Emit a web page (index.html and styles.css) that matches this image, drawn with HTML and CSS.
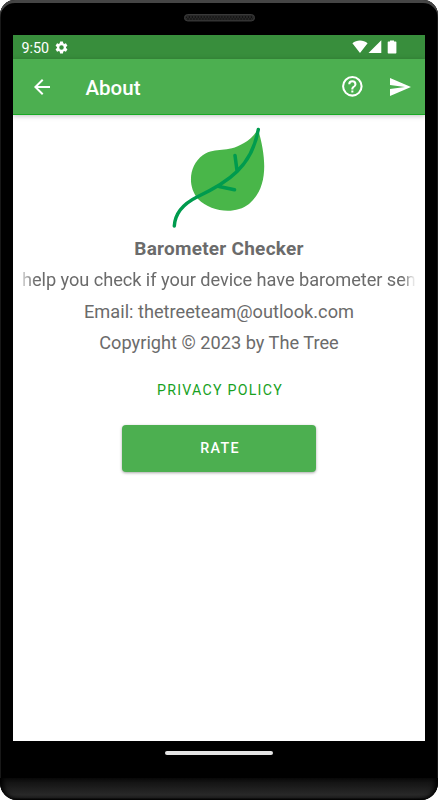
FILE: index.html
```html
<!DOCTYPE html>
<html lang="en">
<head>
<meta charset="utf-8">
<title>About</title>
<link rel="stylesheet" href="styles.css">
</head>
<body>
<div class="phone">
  <div class="phone-top"><svg class="speaker" viewBox="0 0 72 8"><defs><pattern id="mesh" width="3" height="4" patternUnits="userSpaceOnUse"><circle cx="1" cy="1" r=".8" fill="#050505"/><circle cx="2.5" cy="3" r=".8" fill="#050505"/></pattern></defs><rect x=".5" y=".5" width="71" height="6.5" rx="3.2" fill="#292929" stroke="#3c3c3c"/><rect x="2" y="2" width="68" height="4" rx="2" fill="url(#mesh)"/></svg></div>
  <main class="screen">
    <div class="status">
      <span class="time">9:50</span>
      <svg class="gear" viewBox="0 0 24 24"><path d="M19.14 12.94c.04-.3.06-.61.06-.94s-.02-.64-.07-.94l2.03-1.58a.49.49 0 0 0 .12-.61l-1.92-3.32a.49.49 0 0 0-.59-.22l-2.39.96a7 7 0 0 0-1.62-.94l-.36-2.54a.48.48 0 0 0-.48-.41h-3.84a.47.47 0 0 0-.47.41l-.36 2.54c-.59.24-1.13.57-1.62.94l-2.39-.96a.48.48 0 0 0-.59.22L2.74 8.87a.47.47 0 0 0 .12.61l2.03 1.58a6 6 0 0 0 0 1.88l-2.03 1.58a.49.49 0 0 0-.12.61l1.92 3.32c.12.22.37.29.59.22l2.39-.96c.5.38 1.03.7 1.62.94l.36 2.54c.05.24.24.41.48.41h3.84c.24 0 .44-.17.47-.41l.36-2.54a7 7 0 0 0 1.62-.94l2.39.96c.22.08.47 0 .59-.22l1.92-3.32a.47.47 0 0 0-.12-.61zM12 15.6a3.6 3.6 0 1 1 0-7.2 3.6 3.6 0 0 1 0 7.2z"/></svg>
      <svg class="signals" viewBox="0 0 46 14"><path d="M.4 3.3C4.7-.3 11.3-.3 15.6 3.3L8 13zM16.5 13 29.3.2V13zM38 1.4V.4h4v1h1.7q.7 0 .7.7v10.7q0 .8-.7.8h-7.3q-.7 0-.7-.8V2.1q0-.7.7-.7z"/></svg>
    </div>
    <header class="bar">
      <svg class="back" viewBox="0 0 24 24"><path d="M20 11H7.83l5.59-5.59L12 4l-8 8 8 8 1.41-1.41L7.83 13H20z"/></svg>
      <h1>About</h1>
      <svg class="help" viewBox="0 0 24 24"><path d="M11 18h2v-2h-2zm1-16a10 10 0 1 0 0 20 10 10 0 0 0 0-20zm0 18a8 8 0 1 1 0-16 8 8 0 0 1 0 16zm0-14a4 4 0 0 0-4 4h2a2 2 0 1 1 4 0c0 2-3 1.75-3 5h2c0-2.25 3-2.5 3-5a4 4 0 0 0-4-4z"/></svg>
      <svg class="send" viewBox="0 0 24 24"><path d="M2.01 21 23 12 2.01 3 2 10l15 2-15 2z"/></svg>
    </header>
    <section class="content">
      <svg class="leaf" viewBox="0 0 120 120"><path fill="#49b649" d="M98 14C107 45 108 73 89 89C75 100 51 97 38 84C27 71 29 50 43 40C57 31 66 39 84 28Q93 23 98 14Z"/><path class="vein" d="M98.3 14.5C92 51 69 67 37 82C23 89 15 99 14.3 111M75 40.500 77 55.500M59 71.500 74.500 74.800"/></svg>
      <h2>Barometer Checker</h2>
      <p class="marquee">help you check if your device have barometer sens</p>
      <p>Email: thetreeteam@outlook.com</p>
      <p>Copyright © 2023 by The Tree</p>
      <a class="policy">PRIVACY POLICY</a>
      <button class="rate">RATE</button>
    </section>
  </main>
  <div class="phone-bottom"><div class="home"></div></div>
  <div class="chin"></div>
</div>
</body>
</html>
```
FILE: styles.css
```css
* { box-sizing: border-box; }
body { margin: 0; background: #fff; font-family: Roboto, sans-serif; }
.phone { width: 438px; height: 800px; background: #000; border-radius: 15px 15px 17px 17px; overflow: hidden; box-shadow: inset 0 3px 0 #454545, inset 1px 0 0 #181818, inset -1px 0 0 #181818; display: flex; flex-direction: column; }
.phone-top { height: 35px; padding: 14px 0 0 1px; flex: none; }
.speaker { display: block; width: 71px; height: 8px; margin: 0 auto; }
.screen { height: 706px; margin: 0 13.3px; background: #fff; flex: none; overflow: hidden; }
.status { height: 24px; background: #388e3c; display: flex; align-items: center; padding-left: 8.2px; color: #fff; }
.time { font-size: 14.3px; line-height: 24px; width: 32.8px; padding-top: 1px; }
svg { fill: #fff; flex: none; }
.gear { width: 15px; height: 15px; }
.signals { width: 46px; height: 14px; margin-left: auto; margin-right: 26.5px; }
.bar { height: 56px; background: #4caf50; border-bottom: 1.3px solid #18a924; display: flex; align-items: center; position: relative; box-shadow: 0 1px 5px rgba(0,0,0,.25); color: #fff; }
.back { width: 24px; height: 24px; margin-left: 16.7px; }
h1 { margin: 2px auto 0 31.5px; font-size: 20.5px; font-weight: 500; line-height: 28px; }
.help { width: 24.7px; height: 24.7px; }
.send { width: 24px; height: 24px; margin: 0 12.5px 0 23.5px; }
.content { display: flex; flex-direction: column; align-items: center; color: #6b6b6b; }
.leaf { width: 120px; height: 120px; margin-left: 2px; }
.vein { fill: none; stroke: #009b4e; stroke-width: 3.5; stroke-linecap: round; }
h2, p { margin: 0; font-size: 18.2px; line-height: 31.4px; font-weight: 400; white-space: nowrap; }
h2 { font-size: 19px; letter-spacing: .25px; font-weight: 700; margin-top: -2.2px; }
.marquee { width: 394px; letter-spacing: -.05px; overflow: hidden; -webkit-mask-image: linear-gradient(90deg, rgba(0,0,0,.3), #000 14px, #000 380px, transparent); mask-image: linear-gradient(90deg, rgba(0,0,0,.3), #000 14px, #000 380px, transparent); }
.policy { color: #18a11e; font-size: 14.2px; line-height: 20px; letter-spacing: 1.25px; padding-left: 2px; margin-top: 21.4px; }
.rate { width: 194.5px; height: 47px; margin-top: 25px; padding: 0 0 0 2px; border: 0; border-radius: 4px; background: #4caf50; color: #fff; font: 500 14.3px Roboto, sans-serif; letter-spacing: 1.3px; box-shadow: 0 1px 3px rgba(0,0,0,.35); }
.phone-bottom { height: 37px; padding-top: 10px; flex: none; }
.home { width: 108px; height: 4px; margin: 0 auto; border-radius: 2px; background: #e5e5e5; }
.chin { height: 22px; background: linear-gradient(#0d0d0d, #282828 75%, #222 88%, #000); border-radius: 0 0 17px 17px; box-shadow: inset 5px 0 5px -2px #000, inset -5px 0 5px -2px #000; }
```
